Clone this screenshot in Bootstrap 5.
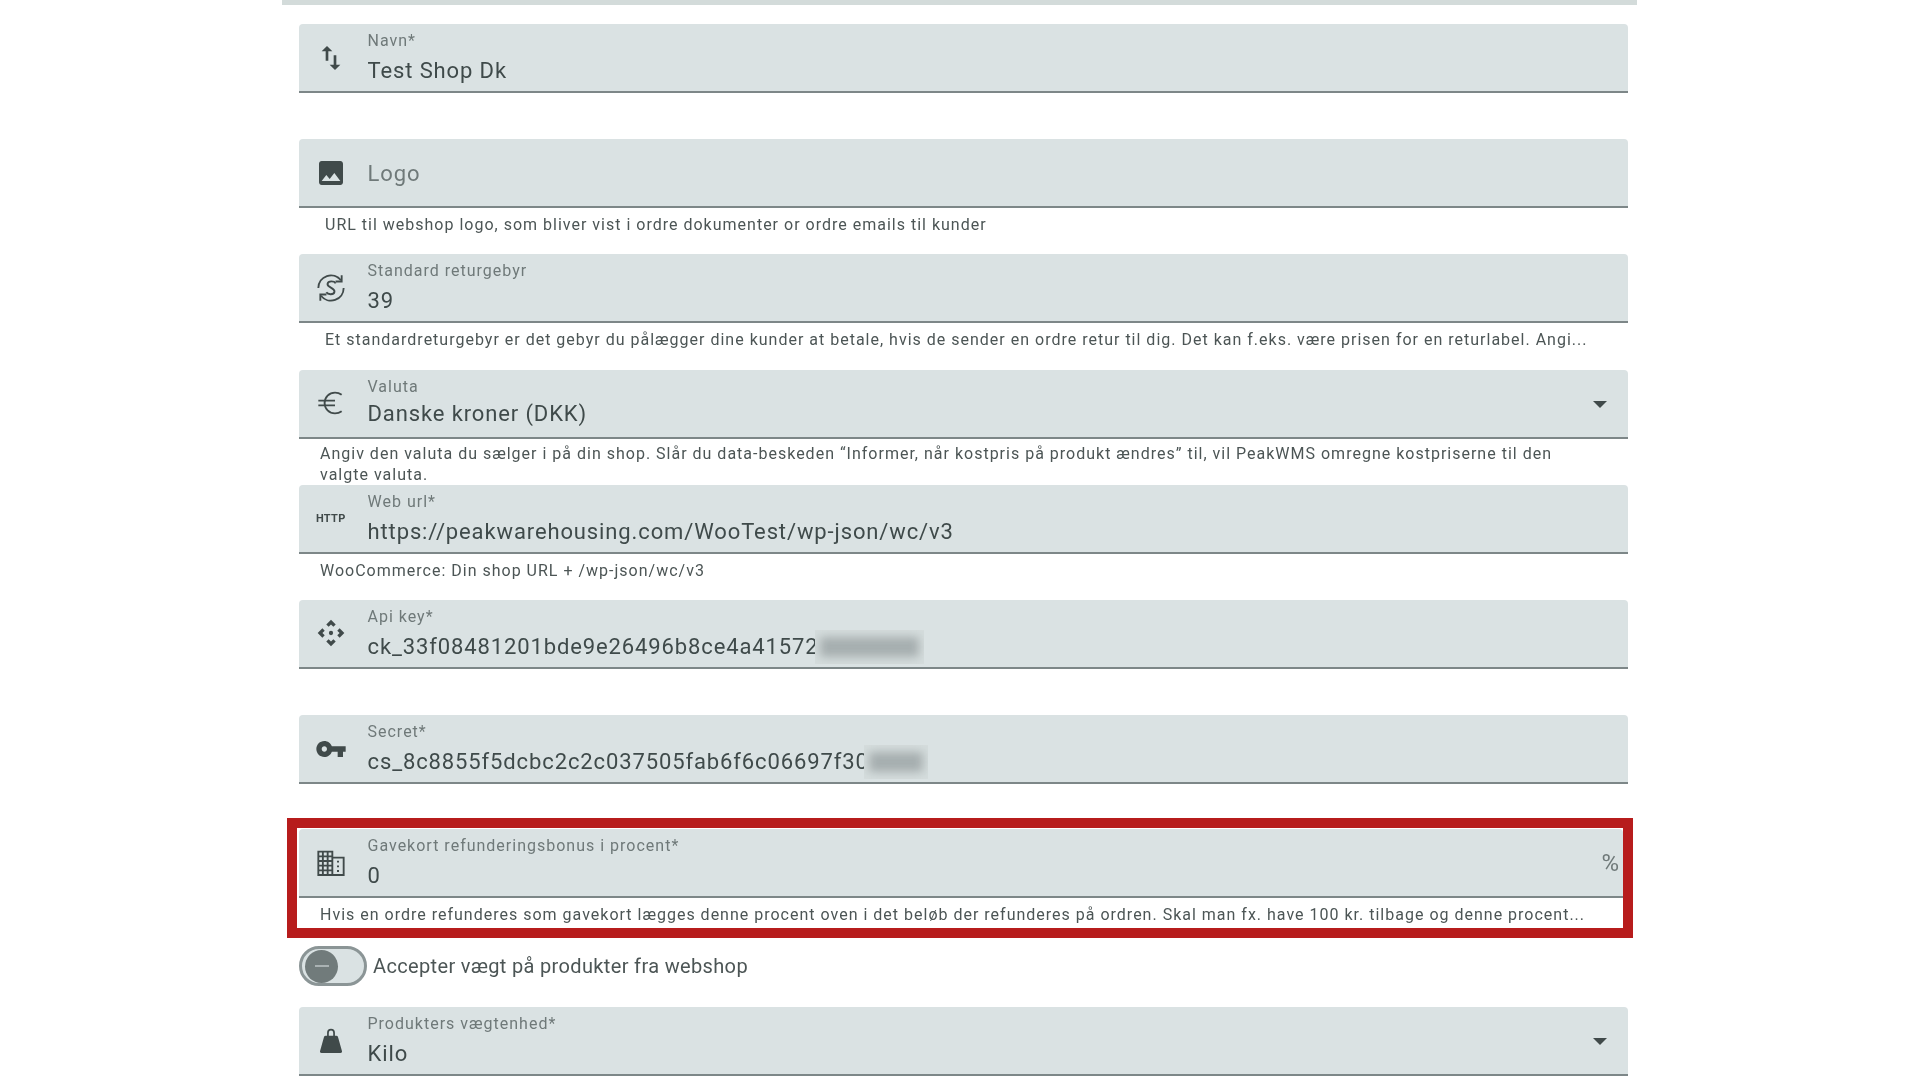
<!DOCTYPE html>
<html lang="en">

<head>
  <meta charset="UTF-8">
  <title>Shop settings</title>
  <link href="https://cdn.jsdelivr.net/npm/bootstrap@5.3.0/dist/css/bootstrap.min.css" rel="stylesheet">
  <style>
    html, body { height: 1080px; overflow: hidden; background: #fff; }
    body { font-family: Roboto, "Liberation Sans", sans-serif; color: #3f4a4a; }

    .top-rule { height: 5px; width: 1355px; margin-left: 282px; background: #d3dbda; }
    .shop-form { width: 1329px; margin-left: 299px; padding-top: 19px; filter: blur(.6px); }

    .field-block { height: 115.2px; }
    .field-box { height: 69px; background: #dae2e3; border-bottom: 2px solid #7d8788; border-radius: 4px 4px 0 0; }
    .field-icon { width: 68.5px; padding-right: 5px; color: #404a4a; }
    .field-icon svg { width: 32px; height: 32px; fill: currentColor; }
    .field-icon svg.line-icon { fill: none; stroke: currentColor; stroke-width: 1.4; }
    .field-label { font-size: 16px; line-height: 17px; color: #6f7979; margin-top: 8px; letter-spacing: 1px; }
    .field-value { font-size: 22px; line-height: 24px; color: #3f4a4a; margin-top: 10px; letter-spacing: .88px; position: relative; }
    .field-value.select-value { margin-top: 7px; }
    .field-empty { font-size: 22px; color: #6f7979; letter-spacing: .88px; padding-top: 2px; }
    .field-hint { font-size: 16px; line-height: 21px; color: #4c5555; padding: 6px 0 0 26px; letter-spacing: 1px; white-space: nowrap; }
    .field-hint.wide { padding: 4.5px 60px 0 21px; white-space: normal; }
    .field-hint.tight { padding-left: 21px; }
    .http-tag { font-size: 11px; font-weight: 700; letter-spacing: .3px; line-height: 1; }
    .caret-down { width: 0; height: 0; border-left: 7px solid transparent; border-right: 7px solid transparent; border-top: 7px solid #404a4a; margin: 2px 21px 0 0; }
    .percent-sign { font-size: 24px; color: #6f7979; margin-right: 4px; margin-top: 1px; }

    /* hidden end of the keys: hard edged box, soft smear inside */
    .redacted { position: absolute; top: -5px; height: 34px; background: #d5dddd; overflow: hidden; }
    .redacted::after { content: ""; position: absolute; inset: 7px 5px; background: #a6aeaf; filter: blur(5px); }
    .redacted.key-end { left: 447px; width: 109px; }
    .redacted.secret-end { left: 496px; width: 64px; }

    .gift-frame { width: 1346px; height: 120px; margin: -12px 0 0 -12px; border: 10px solid #b71c1c; position: relative; padding: 1px 0 0 2px; }
    .gift-frame .field-hint { padding: 5.5px 0 0 21px; }

    .weight-toggle { height: 40px; margin-top: 8px; margin-bottom: 21px; }
    .toggle-track { width: 68px; height: 40px; border: 3px solid #8b9596; border-radius: 20px; background: #dae2e3; padding-left: 3px; }
    .toggle-knob { width: 33px; height: 33px; border-radius: 50%; background: #717b7b; }
    .toggle-knob::after { content: ""; display: block; width: 14px; height: 2px; background: #aab2b3; margin: 15.500px auto 0; }
    .toggle-text { font-size: 20px; color: #4c5555; margin-left: 6px; letter-spacing: .35px; }
  </style>
</head>

<body>
  <div class="top-rule"></div>

  <div class="shop-form">
    <div class="field-block">
      <div class="field-box d-flex align-items-center">
        <div class="field-icon d-flex justify-content-center"><svg viewBox="0 0 24 24"><path d="M16 17.01V10h-2v7.01h-3L15 21l4-3.99h-3zM9 3L5 6.99h3V14h2V6.99h3L9 3z"/></svg></div>
        <div class="flex-grow-1 align-self-start">
          <div class="field-label">Navn*</div>
          <div class="field-value">Test Shop Dk</div>
        </div>
      </div>
    </div>

    <div class="field-block">
      <div class="field-box d-flex align-items-center">
        <div class="field-icon d-flex justify-content-center"><svg viewBox="0 0 24 24"><path d="M21 19V5c0-1.1-.9-2-2-2H5c-1.1 0-2 .9-2 2v14c0 1.1.9 2 2 2h14c1.1 0 2-.9 2-2zM8.5 13.5l2.5 3.01L14.5 12l4.5 6H5l3.5-4.5z"/></svg></div>
        <div class="field-empty">Logo</div>
      </div>
      <div class="field-hint">URL til webshop logo, som bliver vist i ordre dokumenter or ordre emails til kunder</div>
    </div>

    <div class="field-block">
      <div class="field-box d-flex align-items-center">
        <div class="field-icon d-flex justify-content-center"><svg class="line-icon" viewBox="0 0 24 24"><path d="M2.5 12a9.5 9.5 0 0 1 17-5.8M21.5 12a9.5 9.5 0 0 1-17 5.8"/><path d="M20 2.5v4.6h-4.6M4 21.5v-4.6h4.6"/><path d="M15.5 8.5c-1-1.8-5.6-2.2-6.1.4-.5 2.8 5.7 2.8 5.2 5.9-.4 2.500-5 2.300-6.100.400"/></svg></div>
        <div class="flex-grow-1 align-self-start">
          <div class="field-label">Standard returgebyr</div>
          <div class="field-value">39</div>
        </div>
      </div>
      <div class="field-hint">Et standardreturgebyr er det gebyr du pålægger dine kunder at betale, hvis de sender en ordre retur til dig. Det kan f.eks. være prisen for en returlabel. Angi...</div>
    </div>

    <div class="field-block">
      <div class="field-box d-flex align-items-center">
        <div class="field-icon d-flex justify-content-center"><svg class="line-icon" viewBox="0 0 24 24"><path d="M20 5.8A8.6 8.6 0 0 0 15 4.2c-4.4 0-7.8 3.5-7.8 7.8s3.4 7.8 7.8 7.8c1.9 0 3.6-.6 5-1.6M2.5 10.2h12.5M2.5 13.8h12.5"/></svg></div>
        <div class="flex-grow-1 align-self-start">
          <div class="field-label">Valuta</div>
          <div class="field-value select-value">Danske kroner (DKK)</div>
        </div>
        <div class="caret-down"></div>
      </div>
      <div class="field-hint wide">Angiv den valuta du sælger i på din shop. Slår du data-beskeden “Informer, når kostpris på produkt ændres” til, vil PeakWMS omregne kostpriserne til den valgte valuta.</div>
    </div>

    <div class="field-block">
      <div class="field-box d-flex align-items-center">
        <div class="field-icon d-flex justify-content-center"><span class="http-tag">HTTP</span></div>
        <div class="flex-grow-1 align-self-start">
          <div class="field-label">Web url*</div>
          <div class="field-value">https://peakwarehousing.com/WooTest/wp-json/wc/v3</div>
        </div>
      </div>
      <div class="field-hint tight">WooCommerce: Din shop URL + /wp-json/wc/v3</div>
    </div>

    <div class="field-block">
      <div class="field-box d-flex align-items-center">
        <div class="field-icon d-flex justify-content-center"><svg viewBox="0 0 24 24"><path d="M15.54 5.54L13.77 7.3 12 5.54 10.23 7.3 8.46 5.54 12 2zm2.92 10l-1.76-1.77L18.46 12l-1.76-1.77 1.76-1.77L22 12zm-10 2.92l1.77-1.76L12 18.46l1.77-1.76 1.77 1.76L12 22zm-2.92-10l1.76 1.77L5.54 12l1.76 1.77-1.76 1.77L2 12z"/><circle cx="12" cy="12" r="1.6"/></svg></div>
        <div class="flex-grow-1 align-self-start">
          <div class="field-label">Api key*</div>
          <div class="field-value">ck_33f08481201bde9e26496b8ce4a41572<span class="redacted key-end"></span></div>
        </div>
      </div>
    </div>

    <div class="field-block">
      <div class="field-box d-flex align-items-center">
        <div class="field-icon d-flex justify-content-center"><svg viewBox="0 0 24 24"><path d="M12.65 10C11.83 7.67 9.61 6 7 6c-3.31 0-6 2.69-6 6s2.69 6 6 6c2.61 0 4.83-1.67 5.65-4H17v4h4v-4h2v-4H12.65zM7 14c-1.1 0-2-.9-2-2s.9-2 2-2 2 .9 2 2-.9 2-2 2z"/></svg></div>
        <div class="flex-grow-1 align-self-start">
          <div class="field-label">Secret*</div>
          <div class="field-value">cs_8c8855f5dcbc2c2c037505fab6f6c06697f30<span class="redacted secret-end"></span></div>
        </div>
      </div>
    </div>

    <div class="gift-frame">
      <div class="field-box d-flex align-items-center">
        <div class="field-icon d-flex justify-content-center"><svg class="line-icon" viewBox="0 0 24 24"><path d="M2.5 3.5h10.500v17.500h-10.500zM5.900 3.500v17.500M9.500 3.500v17.500M2.500 7h10.500M2.500 10.500h10.500M2.500 14h10.500M2.500 17.500h10.500M13 8h8.500v13H13"/><path d="M16.500 11h1.500M16.500 14.500h1.500M16.500 18h1.500"/></svg></div>
        <div class="flex-grow-1 align-self-start">
          <div class="field-label">Gavekort refunderingsbonus i procent*</div>
          <div class="field-value">0</div>
        </div>
        <div class="percent-sign">%</div>
      </div>
      <div class="field-hint">Hvis en ordre refunderes som gavekort lægges denne procent oven i det beløb der refunderes på ordren. Skal man fx. have 100 kr. tilbage og denne procent...</div>
    </div>

    <div class="weight-toggle d-flex align-items-center">
      <div class="toggle-track d-flex align-items-center"><div class="toggle-knob"></div></div>
      <div class="toggle-text">Accepter vægt på produkter fra webshop</div>
    </div>

    <div class="field-block">
      <div class="field-box d-flex align-items-center">
        <div class="field-icon d-flex justify-content-center"><svg viewBox="0 0 24 24"><path d="M8 8h8c.6 0 1 .3 1.200.9l3 10.600c.3.900-.3 1.500-1.100 1.500H4.900c-.8 0-1.400-.6-1.100-1.500l3-10.600C7 8.300 7.400 8 8 8z"/><path d="M9.700 9V5.800a2.300 2.300 0 0 1 4.600 0V9" fill="none" stroke="currentColor" stroke-width="1.300"/></svg></div>
        <div class="flex-grow-1 align-self-start">
          <div class="field-label">Produkters vægtenhed*</div>
          <div class="field-value">Kilo</div>
        </div>
        <div class="caret-down"></div>
      </div>
    </div>
  </div>

  <script src="https://cdn.jsdelivr.net/npm/bootstrap@5.3.0/dist/js/bootstrap.bundle.min.js"></script>
</body>

</html>
